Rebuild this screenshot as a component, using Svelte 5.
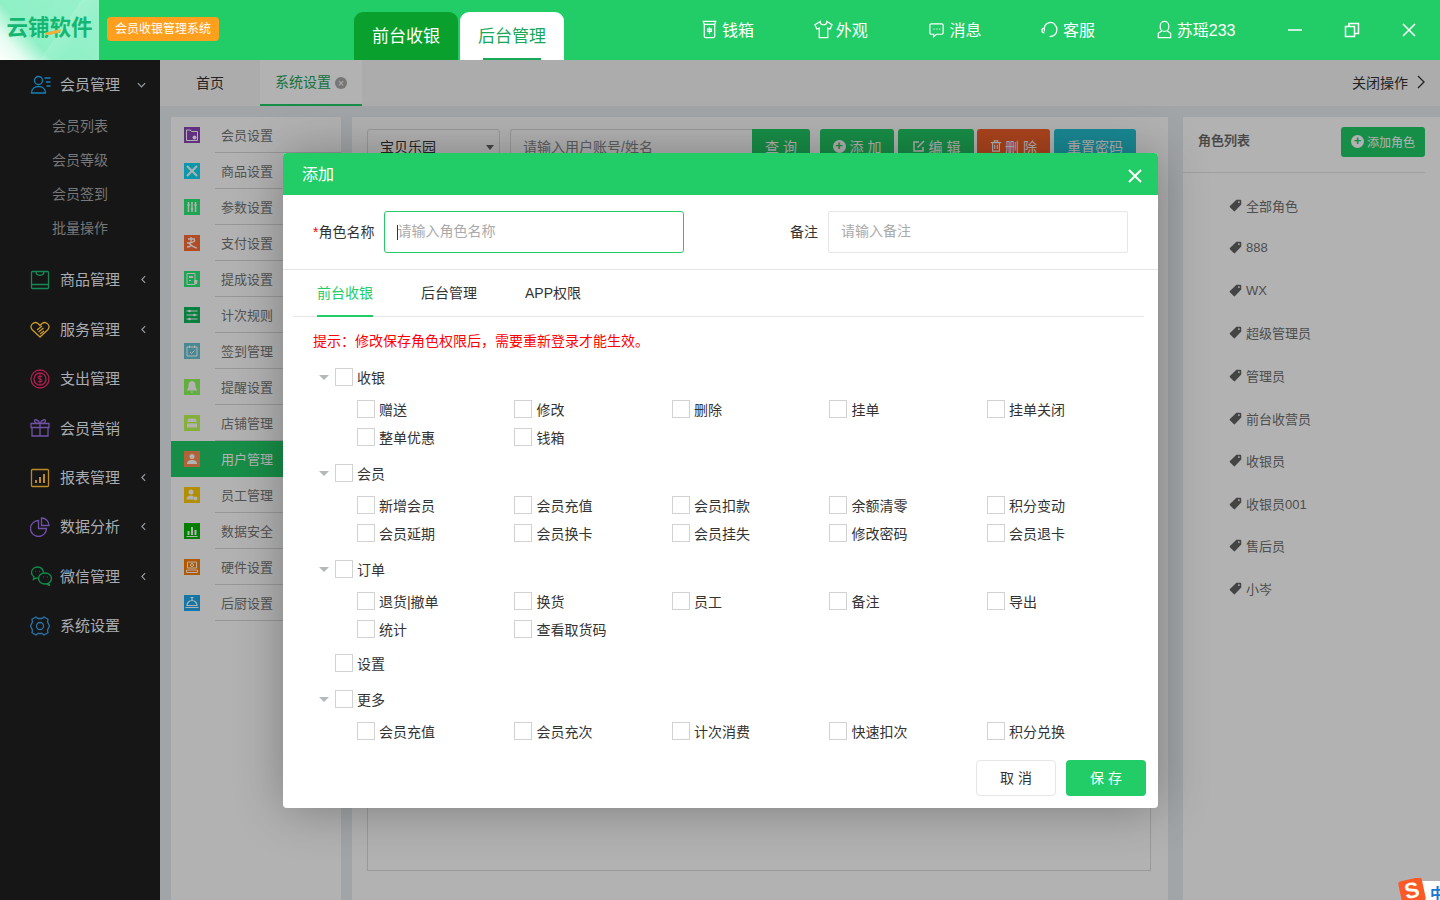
<script lang="ts">
  const topNav = [
    { label: '钱箱', icon: 'M3.500 1.500h13l-1 3H4.500zM4.500 4.500h11V17a1.500 1.500 0 0 1-1.500 1.500H6A1.500 1.500 0 0 1 4.500 17zM10 7.500v7M8 9.500h4v2.500H8z' },
    { label: '外观', icon: 'M6.500 1.500 1 5l2 4.500 2.500-1V18.500h9V8.500l2.500 1L19 5l-5.500-3.500a3.500 3.500 0 0 1-7 0z' },
    { label: '消息', icon: 'M4.500 4h11a1.500 1.500 0 0 1 1.500 1.500v8a1.500 1.500 0 0 1-1.500 1.500H10l-3 2.500V15H4.500A1.500 1.500 0 0 1 3 13.500v-8A1.500 1.500 0 0 1 4.500 4zM7 9.500h1M10 9.500h1M13 9.500h1' },
    { label: '客服', icon: 'M3.500 12V9a6.500 6.500 0 0 1 11.500-4M3.500 8.500a2.500 2.500 0 0 0 0 5M14.500 5c3 2.500 3 8 0 10.500-1 1-3 2-5.500 2' },
    { label: '苏瑶233', icon: 'M10 1.500a4.500 4.500 0 0 1 4.500 4.500v1.500a4.500 4.500 0 0 1-9 0V6A4.500 4.500 0 0 1 10 1.500zM7 11.500 3.500 14v4.500h13V14L13 11.500' }
  ];

  const menu = [
    {
      label: '会员管理', color: '#1681b8', open: true, w: 20,
      svg: '<circle cx="8" cy="5.500" r="4"/><path d="M1 18c0-4 3-6.500 7-6.500s7 2.500 7 6.500zM14 3h6M15.500 7H20M16 11h4"/>',
      children: ['会员列表', '会员等级', '会员签到', '批量操作']
    },
    { label: '商品管理', color: '#168a55', arrow: true, svg: '<rect x="1.500" y="1.500" width="17" height="17" rx="1"/><path d="M6 1.500c0 5 8 5 8 0M1.500 14.500h17"/>' },
    { label: '服务管理', color: '#c9992a', arrow: true, svg: '<path d="M10 18 2 10.500c-3-4 2-9 6-6l2 2 2-2c4-3 9 2 6 6z"/><path d="m7 11 5-4M8.500 13l5-4M10 15l4-3"/>' },
    { label: '支出管理', color: '#b01e50', svg: '<circle cx="10" cy="10" r="9"/><circle cx="10" cy="10" r="6"/><path d="M12 8c-1-1.500-4-1-4 .5s4 1.500 4 3-3 2-4 .5M10 5.500v9" stroke-width="1.100"/>' },
    { label: '会员营销', color: '#6f52a8', svg: '<path d="M2 9.500h16V18H2zM1 5.500h18v4H1zM10 5.500V18M10 5.500C8 1 3 .5 5 4c.5 1 3 1.500 5 1.500zM10 5.500c2-4.500 7-5 5-1.500-.5 1-3 1.500-5 1.500z"/>' },
    { label: '报表管理', color: '#bb8a22', arrow: true, svg: '<rect x="1.500" y="1.500" width="17" height="17" rx="1"/><path d="M6 15v-3M10 15V9M14 15V6" stroke-width="2"/>' },
    { label: '数据分析', color: '#6f52a8', arrow: true, svg: '<path d="M8.500 3.500a8 8 0 1 0 8 8h-8z"/><path d="M11.500 1a7.500 7.500 0 0 1 7.500 7.500h-7.500z"/>' },
    { label: '微信管理', color: '#0f8f4e', arrow: true, w: 22, svg: '<path d="M13 6.500C12.500 3 10 1 7 1 3.500 1 1 3.500 1 6.500c0 2 1 3.500 2.500 4.500L3 13.500l2.500-1.500c1 .2 1.500.3 2.500.2"/><ellipse cx="14.500" cy="12.500" rx="6.500" ry="5.500"/><path d="m18 17 1 2.500-3-1.500M5 5.500h.5M9 5.500h.5M12.500 11h.5M16.500 11h.5"/>' },
    { label: '系统设置', color: '#2a74a8', svg: '<path d="m6 1 2 1.500h4L14 1l4 2.300-.5 2.500 2 4.200-2 4.200.5 2.500L14 19l-2-1.500H8L6 19l-4-2.300.5-2.500-2-4.200 2-4.200L2 3.300z"/><circle cx="10" cy="10" r="3.500"/>' }
  ];

  const subMenu = [
    { label: '会员设置', color: '#8c45b5', svg: '<path d="M2.500 3h4l1 1.500h6v9h-11z" fill="none" stroke="#fff"/><circle cx="10.500" cy="10.500" r="2" fill="#fff"/>' },
    { label: '商品设置', color: '#10d8f7', svg: '<path d="m3 3 10 10M13 3 3 13" stroke="#fff" stroke-width="2"/>' },
    { label: '参数设置', color: '#2ced77', svg: '<path d="M4.500 3v10M8 3v10M11.500 3v10" stroke="#fff" stroke-width="1.500"/><path d="M3.500 6h2M7 10h2M10.500 6h2" stroke="#fff" stroke-width="2"/>' },
    { label: '支付设置', color: '#ff6e35', svg: '<path d="M4 4h7M7 2v5M3 8c3 0 7 0 8-3M5 7c1 4 5 5 8 6M3 12c3 0 5-2 5-2" fill="none" stroke="#fff" stroke-width="1.300"/>' },
    { label: '提成设置', color: '#2ced77', svg: '<path d="M3 2.500h8v11H3z" fill="none" stroke="#fff"/><path d="M5 5h4v2H5zM5 9h2v1H5zM10 9h3.500l-.5 4h-2.500z" fill="#fff"/>' },
    { label: '计次规则', color: '#0ab85a', svg: '<path d="M2.500 4h11M2.500 8h11M2.500 12h11" stroke="#fff"/><circle cx="5.500" cy="4" r="1.300" fill="#fff"/><circle cx="10.500" cy="8" r="1.300" fill="#fff"/><circle cx="5.500" cy="12" r="1.300" fill="#fff"/>' },
    { label: '签到管理', color: '#69c5d5', svg: '<path d="M3 4h10v9H3zM5.500 2.500V5M10.500 2.500V5" fill="none" stroke="#fff"/><path d="m6 9 1.500 1.500L10.500 7.500" fill="none" stroke="#fff"/>' },
    { label: '提醒设置', color: '#8cfb58', svg: '<path d="M8 2c3 0 3.500 3 3.500 5s1.500 4 2 4.500h-11c.5-.5 2-2.500 2-4.500S5 2 8 2zM6.500 12.500h3L8 14z" fill="#fff"/>' },
    { label: '店铺管理', color: '#bdfb52', svg: '<path d="M4.500 3.500h7l1.500 3.500H3zM3 8.500h10v4H3z" fill="#fff"/>' },
    { label: '用户管理', color: '#ff8f52', svg: '<circle cx="8" cy="5.500" r="2.500" fill="#fff"/><path d="M3 13c0-3 2-4 5-4s5 1 5 4z" fill="#fff"/>', active: true },
    { label: '员工管理', color: '#ffcc00', svg: '<circle cx="7" cy="5" r="2.500" fill="#fff"/><path d="M2.500 12.500c0-3 2-4 4.500-4 1 0 2 .2 2.500 1v3z" fill="#fff"/><circle cx="11.500" cy="11.500" r="2" fill="#fff"/>' },
    { label: '数据安全', color: '#00b600', svg: '<path d="M4.500 8v4M8 4v8M11.500 7v5" stroke="#fff" stroke-width="2"/><path d="M2.500 13.500h11" stroke="#fff"/>' },
    { label: '硬件设置', color: '#ff8000', svg: '<path d="M3.500 3h9v6h-9zM2.500 11h11v2.500h-11z" fill="none" stroke="#fff"/><circle cx="8" cy="6" r="1.500" fill="none" stroke="#fff"/>' },
    { label: '后厨设置', color: '#1fabf0', svg: '<path d="M3 10.500a5 5 0 0 1 10 0zM1.500 12.500h13M8 3v2.500" fill="none" stroke="#fff" stroke-width="1.200"/><path d="M6.500 2.500h3" stroke="#fff"/>' }
  ];

  const roles = ['全部角色', '888', 'WX', '超级管理员', '管理员', '前台收营员', '收银员', '收银员001', '售后员', '小岑'];

  const perms = [
    { label: '收银', items: ['赠送', '修改', '删除', '挂单', '挂单关闭', '整单优惠', '钱箱'] },
    { label: '会员', items: ['新增会员', '会员充值', '会员扣款', '余额清零', '积分变动', '会员延期', '会员换卡', '会员挂失', '修改密码', '会员退卡'] },
    { label: '订单', items: ['退货|撤单', '换货', '员工', '备注', '导出', '统计', '查看取货码'], tight: true },
    { label: '设置', items: [] },
    { label: '更多', items: ['会员充值', '会员充次', '计次消费', '快速扣次', '积分兑换'] }
  ];
</script>

<div class="app">
  <header class="top">
    <div class="logo">
      <span class="logo-text">云铺软件</span>
      <i class="swoosh"></i>
    </div>
    <span class="badge">会员收银管理系统</span>
    <nav class="top-tabs">
      <button class="top-tab">前台收银</button>
      <button class="top-tab active">后台管理</button>
    </nav>
    <div class="top-nav">
      {#each topNav as item}
        <span class="top-item">
          <svg viewBox="0 0 20 20" width="19" height="19" fill="none" stroke="#fff" stroke-width="1.300"><path d={item.icon} /></svg>
          {item.label}
        </span>
      {/each}
    </div>
    <div class="win-btns">
      <svg viewBox="0 0 16 16" width="16" height="16" fill="none" stroke="#fff" stroke-width="1.500"><path d="M1 8h14" /></svg>
      <svg viewBox="0 0 16 16" width="16" height="16" fill="none" stroke="#fff" stroke-width="1.500"><path d="M1.500 4.500h9v10h-9zM5 4.500V1.500h9.500v10h-4" /></svg>
      <svg viewBox="0 0 16 16" width="16" height="16" fill="none" stroke="#fff" stroke-width="1.500"><path d="m2 2 12 12M14 2 2 14" /></svg>
    </div>
  </header>

  <div class="body">
    <aside class="side">
      {#each menu as m}
        <div class="menu-item">
          <svg class="menu-icon" viewBox="0 0 {m.w || 20} 20" width={m.w ? m.w + 1 : 20} height="20" fill="none" stroke={m.color} stroke-width="1.300">{@html m.svg}</svg>
          <span class="menu-label">{m.label}</span>
          {#if m.open}
            <svg class="chev down" viewBox="0 0 10 6" width="9" height="6" fill="none" stroke="#9aa0a8" stroke-width="1.300"><path d="m1 1 4 4 4-4" /></svg>
          {:else if m.arrow}
            <svg class="chev left" viewBox="0 0 6 10" width="5" height="9" fill="none" stroke="#9aa0a8" stroke-width="1.300"><path d="M5 1 1 5l4 4" /></svg>
          {/if}
        </div>
        {#if m.children}
          <div class="sub-list">
            {#each m.children as c}
              <div class="sub-item">{c}</div>
            {/each}
          </div>
        {/if}
      {/each}
    </aside>

    <main class="main">
      <div class="tabbar">
        <span class="page-tab">首页</span>
        <span class="page-tab current">系统设置<i class="tab-x">×</i></span>
        <span class="close-ops">
          关闭操作
          <svg viewBox="0 0 8 14" width="8" height="14" fill="none" stroke="#333" stroke-width="1.300"><path d="m1 1 6 6-6 6" /></svg>
        </span>
      </div>

      <div class="content">
        <div class="sub-side">
          {#each subMenu as s}
            <div class="set-row" class:active={s.active}>
              <svg class="set-icon" viewBox="0 0 16 16" width="16" height="16" style="background:{s.color}">{@html s.svg}</svg>
              <span class="set-label">{s.label}</span>
            </div>
          {/each}
        </div>

        <div class="panel">
          <div class="toolbar">
            <div class="fake-select">宝贝乐园<i class="caret"></i></div>
            <div class="search">
              <span class="search-text">请输入用户账号/姓名</span>
              <span class="tbtn query">查 询</span>
            </div>
            <span class="tbtn green w74"><b class="plus">+</b>添 加</span>
            <span class="tbtn green w76">
              <svg viewBox="0 0 14 14" width="14" height="14" fill="none" stroke="#fff" stroke-width="1.500"><path d="M11 8v4H2V3h5M5.500 8.500 12 2" /></svg>
              编 辑
            </span>
            <span class="tbtn red">
              <svg viewBox="0 0 14 14" width="12" height="14" fill="none" stroke="#fff" stroke-width="1.300"><path d="M1 3h12M3 3v10h8V3M5 3V1h4v2M5.500 5.500v5M8.500 5.500v5" /></svg>
              删 除
            </span>
            <span class="tbtn teal">重置密码</span>
          </div>
          <div class="table-box"></div>
        </div>

        <div class="roles">
          <div class="roles-head">
            <span class="roles-title">角色列表</span>
            <span class="add-role"><b class="plus">+</b>添加角色</span>
          </div>
          <ul class="role-list">
            {#each roles as r}
              <li>
                <svg viewBox="0 0 14 14" width="13" height="13"><path fill="#626262" d="M8 .8h4.200c.6 0 1 .4 1 1V6L6.500 13a1 1 0 0 1-1.400 0L1 8.900a1 1 0 0 1 0-1.400zM10.700 2.300a1 1 0 1 0 0 2 1 1 0 0 0 0-2z" /></svg>
                {r}
              </li>
            {/each}
          </ul>
        </div>
      </div>

      <div class="shade"></div>

      <div class="modal">
        <div class="modal-head">
          <span>添加</span>
          <svg viewBox="0 0 14 14" width="14" height="14" fill="none" stroke="#fff" stroke-width="2"><path d="m1 1 12 12M13 1 1 13" /></svg>
        </div>

        <div class="form-row">
          <label class="field first">
            <span class="field-label"><em>*</em>角色名称</span>
            <span class="input focus"><i class="text-caret"></i>请输入角色名称</span>
          </label>
          <label class="field">
            <span class="field-label">备注</span>
            <span class="input">请输入备注</span>
          </label>
        </div>

        <div class="modal-tabs">
          <span class="mtab on">前台收银</span>
          <span class="mtab">后台管理</span>
          <span class="mtab">APP权限</span>
        </div>

        <p class="tip">提示：修改保存角色权限后，需要重新登录才能生效。</p>

        <div class="tree">
          {#each perms as g}
            <div class="group" class:tight={g.tight}>
              <div class="group-head">
                {#if g.items.length}
                  <i class="tree-arrow"></i>
                {:else}
                  <i class="tree-space"></i>
                {/if}
                <i class="check"></i>
                <span>{g.label}</span>
              </div>
              {#if g.items.length}
                <div class="perm-grid">
                  {#each g.items as p}
                    <span class="perm"><i class="check"></i>{p}</span>
                  {/each}
                </div>
              {/if}
            </div>
          {/each}
        </div>

        <div class="modal-foot">
          <button class="btn ghost">取 消</button>
          <button class="btn save">保 存</button>
        </div>
      </div>

      <div class="ime">
        <span class="ime-bar"><span class="ime-zh">中</span></span>
        <span class="ime-s">S</span>
      </div>
    </main>
  </div>
</div>

<style>
  :global(body) {
    margin: 0;
    font-family: "Liberation Sans", "Noto Sans CJK SC", sans-serif;
    background: #fff;
  }

  .app {
    width: 1440px;
    height: 900px;
    overflow: hidden;
    display: flex;
    flex-direction: column;
    font-size: 14px;
    color: #333;
  }

  /* header */
  .top {
    height: 60px;
    flex-shrink: 0;
    background: #22cc66;
    display: flex;
    align-items: center;
    position: relative;
  }

  .logo {
    width: 99px;
    height: 60px;
    position: relative;
    background:
      linear-gradient(125deg, transparent 58%, rgba(255, 255, 255, 0.12) 58%, transparent 75%),
      linear-gradient(48deg, #fff 0, #e4fcf0 16%, #8ff0c6 34%, #98f1ca 100%);
    display: flex;
    align-items: center;
    justify-content: center;
    flex-shrink: 0;
  }

  .logo-text {
    font-size: 21.500px;
    font-weight: 700;
    color: #14b672;
    white-space: nowrap;
    margin-top: -9px;
  }

  .swoosh {
    position: absolute;
    left: 45px;
    top: 31px;
    width: 16px;
    height: 3px;
    background: #f3b13c;
    border-radius: 0 0 8px 8px;
    transform: rotate(-12deg);
  }

  .badge {
    margin-left: 8px;
    width: 112px;
    height: 24px;
    background: #ff9f1e;
    border-radius: 4px;
    color: #fff;
    font-size: 12px;
    line-height: 24px;
    text-align: center;
    flex-shrink: 0;
    margin-top: -2px;
  }

  .top-tabs {
    display: flex;
    gap: 2px;
    margin-left: 135px;
    align-self: flex-end;
  }

  .top-tab {
    width: 104px;
    height: 48px;
    border: 0;
    border-radius: 9px 9px 0 0;
    background: #0aa02d;
    color: #fff;
    font: inherit;
    font-size: 17px;
    padding: 0 0 3px;
  }

  .top-tab.active {
    background: #fff;
    color: #17a85a;
    position: relative;
  }

  .top-tab.active::after {
    content: '';
    position: absolute;
    left: 23px;
    right: 23px;
    bottom: 0;
    height: 2px;
    background: #17a85a;
  }

  .top-nav {
    display: flex;
    gap: 60.700px;
    margin-left: 137px;
    margin-top: -2px;
  }

  .top-item {
    display: inline-flex;
    align-items: center;
    gap: 3px;
    color: #fff;
    font-size: 16px;
    white-space: nowrap;
  }

  .top-item svg {
    margin-left: -1px;
  }

  .win-btns {
    display: flex;
    gap: 41px;
    margin-left: 51px;
    margin-top: 0;
  }

  .body {
    flex: 1;
    display: flex;
    min-height: 0;
  }

  /* left menu */
  .side {
    width: 160px;
    flex-shrink: 0;
    background: #161617;
  }

  .menu-item {
    height: 49.400px;
    display: flex;
    align-items: center;
    padding-left: 30px;
    position: relative;
    color: #a9adb2;
    font-size: 15px;
  }

  .menu-icon {
    flex-shrink: 0;
  }

  .menu-label {
    position: absolute;
    left: 60px;
    top: 13px;
  }

  .chev {
    position: absolute;
  }

  .chev.down {
    left: 137px;
    top: 22px;
  }

  .chev.left {
    left: 141px;
    top: 20px;
  }

  .sub-list {
    padding-bottom: 10px;
  }

  .sub-item {
    height: 34px;
    line-height: 34px;
    padding-left: 52px;
    color: #777;
    font-size: 14px;
  }

  /* main */
  .main {
    flex: 1;
    position: relative;
    background: #e9ecef;
    min-width: 0;
    display: flex;
    flex-direction: column;
  }

  .tabbar {
    height: 46px;
    flex-shrink: 0;
    background: #f6f6f6;
    display: flex;
    align-items: center;
    font-size: 14px;
  }

  .page-tab {
    width: 100px;
    height: 46px;
    line-height: 46px;
    text-align: center;
    box-sizing: border-box;
    color: #333;
  }

  .page-tab.current {
    width: 102px;
    background: #fff;
    color: #22a45a;
    border-bottom: 2px solid #22cc66;
    line-height: 44px;
    text-align: left;
    padding-left: 15px;
    white-space: nowrap;
  }

  .tab-x {
    display: inline-block;
    width: 12px;
    height: 12px;
    margin-left: 4px;
    border-radius: 50%;
    background: #aaa;
    color: #fff;
    font-size: 11px;
    font-style: normal;
    line-height: 12px;
    text-align: center;
    vertical-align: 0;
  }

  .close-ops {
    margin-left: auto;
    margin-right: 15px;
    display: inline-flex;
    align-items: center;
    gap: 9px;
    font-size: 14px;
    padding-bottom: 2px;
  }

  .content {
    flex: 1;
    display: flex;
    padding: 11px 0 0 11px;
    min-height: 0;
  }

  .sub-side {
    width: 170px;
    flex-shrink: 0;
    background: #fff;
  }

  .set-row {
    height: 36px;
    display: flex;
    align-items: center;
    padding-left: 13px;
    position: relative;
    color: #777;
    font-size: 13px;
    box-sizing: border-box;
  }

  .set-row::after {
    content: '';
    position: absolute;
    left: 44px;
    right: 0;
    bottom: 0;
    height: 1px;
    background: #d8d8d8;
  }

  .set-row.active {
    background: #22cc66;
    color: #fff;
  }

  .set-row.active::after {
    display: none;
  }

  .set-icon {
    flex-shrink: 0;
  }

  .set-label {
    margin-left: 21px;
    margin-top: -2px;
  }

  .panel {
    width: 816px;
    margin-left: 11px;
    flex-shrink: 0;
    background: #fff;
    padding: 12px 17px 29px 15px;
    box-sizing: border-box;
    display: flex;
    flex-direction: column;
  }

  .toolbar {
    display: flex;
    height: 36px;
    flex-shrink: 0;
  }

  .fake-select {
    width: 133px;
    box-sizing: border-box;
    border: 1px solid #ddd;
    border-radius: 3px;
    padding: 6px 12px;
    position: relative;
    font-size: 14px;
    color: #333;
  }

  .caret {
    position: absolute;
    right: 5px;
    top: 15px;
    border: 4px solid transparent;
    border-top: 5px solid #666;
  }

  .search {
    display: flex;
    width: 300px;
    margin-left: 10px;
    box-sizing: border-box;
    border: 1px solid #ddd;
    border-right: 0;
    border-radius: 3px;
  }

  .search-text {
    flex: 1;
    padding: 6px 12px;
    color: #888;
    font-size: 14px;
    white-space: nowrap;
  }

  .tbtn {
    display: inline-flex;
    align-items: center;
    justify-content: center;
    gap: 3px;
    box-sizing: border-box;
    height: 36px;
    padding-bottom: 2px;
    color: #fff;
    border-radius: 3px;
    font-size: 14px;
    white-space: nowrap;
  }

  .tbtn.query {
    width: 58px;
    background: #22cc66;
    margin: -1px 0;
    border-radius: 0 3px 3px 0;
  }

  .tbtn.green {
    background: #22cc66;
  }

  .w74 {
    width: 74px;
    margin-left: 10px;
  }

  .w76 {
    width: 76px;
    margin-left: 4px;
  }

  .tbtn.red {
    width: 73px;
    margin-left: 3px;
    background: #f6622a;
  }

  .tbtn.teal {
    width: 82px;
    margin-left: 4px;
    background: #24c4d4;
  }

  .plus {
    display: inline-block;
    width: 13px;
    height: 13px;
    border-radius: 50%;
    background: #fff;
    color: #22cc66;
    font-size: 13px;
    line-height: 12px;
    text-align: center;
    margin-right: 1px;
  }

  .add-role .plus {
    margin-right: 3px;
  }

  .table-box {
    flex: 1;
    margin-top: 5px;
    border: 1px solid #ddd;
  }

  .roles {
    width: 257px;
    margin-left: 15px;
    flex-shrink: 0;
    background: #fff;
  }

  .roles-head {
    height: 55px;
    margin-right: 15px;
    border-bottom: 1px solid #e6e6e6;
    display: flex;
    align-items: flex-start;
    justify-content: space-between;
    padding-left: 15px;
    box-sizing: content-box;
  }

  .roles-title {
    margin-top: 13px;
    font-size: 13px;
    font-weight: 500;
    color: #666;
    -webkit-text-stroke: 0.2px #666;
  }

  .add-role {
    margin-top: 10px;
    width: 84px;
    height: 30px;
    padding-bottom: 2px;
    box-sizing: border-box;
    border-radius: 3px;
    background: #22cc66;
    color: #fff;
    font-size: 12px;
    display: inline-flex;
    align-items: center;
    justify-content: center;
  }

  .role-list {
    list-style: none;
    margin: 11px 0 0;
    padding: 0 0 0 46px;
  }

  .role-list li {
    height: 42.550px;
    display: flex;
    align-items: center;
    gap: 4px;
    color: #707070;
    font-size: 13px;
  }

  .shade {
    position: absolute;
    inset: 0;
    background: rgba(0, 0, 0, 0.3);
  }

  /* dialog */
  .modal {
    position: absolute;
    left: 123px;
    top: 93px;
    width: 875px;
    height: 655px;
    background: #fff;
    border-radius: 4px;
    box-shadow: 1px 1px 50px rgba(0, 0, 0, 0.3);
    display: flex;
    flex-direction: column;
  }

  .modal-head {
    height: 42px;
    box-sizing: border-box;
    padding: 0 16px 2px 19px;
    flex-shrink: 0;
    background: #22cc66;
    border-radius: 4px 4px 0 0;
    color: #fff;
    font-size: 16px;
    display: flex;
    align-items: center;
    justify-content: space-between;
  }

  .modal-head svg {
    margin-top: 6px;
  }

  .form-row {
    height: 75px;
    box-sizing: border-box;
    flex-shrink: 0;
    border-bottom: 1px solid #e6e6e6;
    display: flex;
    padding-top: 16px;
  }

  .field {
    display: flex;
    align-items: center;
    height: 42px;
  }

  .field.first {
    margin-left: 30px;
    width: 477px;
  }

  .field-label {
    margin-right: 10px;
    margin-top: -2px;
    white-space: nowrap;
    color: #333;
  }

  .field-label em {
    color: #f00;
    font-style: normal;
  }

  .input {
    width: 300px;
    height: 42px;
    box-sizing: border-box;
    border: 1px solid #e6e6e6;
    border-radius: 2px;
    line-height: 39px;
    padding-left: 12px;
    color: #aaa;
    display: block;
    position: relative;
    flex-shrink: 0;
  }

  .input.focus {
    border-color: #22cc66;
    border-radius: 3px;
  }

  .text-caret {
    position: absolute;
    left: 12px;
    top: 13px;
    width: 1px;
    height: 15px;
    background: #333;
  }

  .modal-tabs {
    height: 47px;
    box-sizing: border-box;
    flex-shrink: 0;
    margin: 0 14px 0 10px;
    padding-left: 24px;
    border-bottom: 1px solid #e6e6e6;
    display: flex;
    gap: 48px;
  }

  .mtab {
    line-height: 46px;
    height: 47px;
    box-sizing: border-box;
    color: #333;
    white-space: nowrap;
  }

  .mtab.on {
    color: #22cc66;
    border-bottom: 2px solid #22cc66;
  }

  .tip {
    margin: 14px 0 0 30px;
    height: 20px;
    line-height: 20px;
    color: #f00;
    font-size: 14px;
  }

  .tree {
    margin-top: 17px;
    padding-left: 36px;
  }

  .group {
    margin-bottom: 18px;
  }

  .group.tight {
    margin-bottom: 16px;
  }

  .group-head {
    display: flex;
    align-items: center;
    height: 18px;
    gap: 4px;
  }

  .tree-arrow {
    width: 0;
    height: 0;
    margin-right: 2px;
    border: 5px solid transparent;
    border-top: 5px solid #b5b8bd;
    border-bottom: 0;
  }

  .tree-space {
    width: 12px;
  }

  .check {
    display: inline-block;
    width: 18px;
    height: 18px;
    box-sizing: border-box;
    border: 1px solid #d2d2d2;
    background: #fff;
    flex-shrink: 0;
  }

  .perm-grid {
    margin-top: 14px;
    margin-left: 1.900px;
    display: grid;
    grid-template-columns: repeat(5, 157.500px);
    row-gap: 10px;
    padding-left: 36px;
  }

  .perm {
    display: flex;
    align-items: center;
    height: 18px;
    gap: 4px;
    white-space: nowrap;
  }

  .modal-foot {
    margin-top: auto;
    padding: 0 12px 12px 0;
    display: flex;
    justify-content: flex-end;
    gap: 10px;
  }

  .btn {
    width: 80px;
    height: 36px;
    border-radius: 4px;
    font: inherit;
    font-size: 14px;
    box-sizing: border-box;
    padding: 0 0 2px;
  }

  .btn.ghost {
    background: #fff;
    border: 1px solid #e6e6e6;
    color: #333;
  }

  .btn.save {
    background: #22cc66;
    border: 0;
    color: #fff;
  }

  /* input method badge, lies over the page */
  .ime {
    position: absolute;
    right: 0;
    bottom: 0;
    width: 42px;
    height: 22px;
    overflow: hidden;
  }

  .ime-bar {
    position: absolute;
    left: 24px;
    top: 3px;
    right: 0;
    bottom: 0;
    background: #fff;
  }

  .ime-zh {
    position: absolute;
    left: 8px;
    top: 5px;
    color: #1976d2;
    font-size: 15px;
    font-weight: 700;
    line-height: 16px;
  }

  .ime-s {
    position: absolute;
    left: 2px;
    top: 1px;
    width: 24px;
    height: 24px;
    border-radius: 3px;
    background: #fb5a26;
    color: #fff;
    font-weight: 700;
    font-size: 22px;
    line-height: 24px;
    text-align: center;
    transform: rotate(-12deg);
  }
</style>
